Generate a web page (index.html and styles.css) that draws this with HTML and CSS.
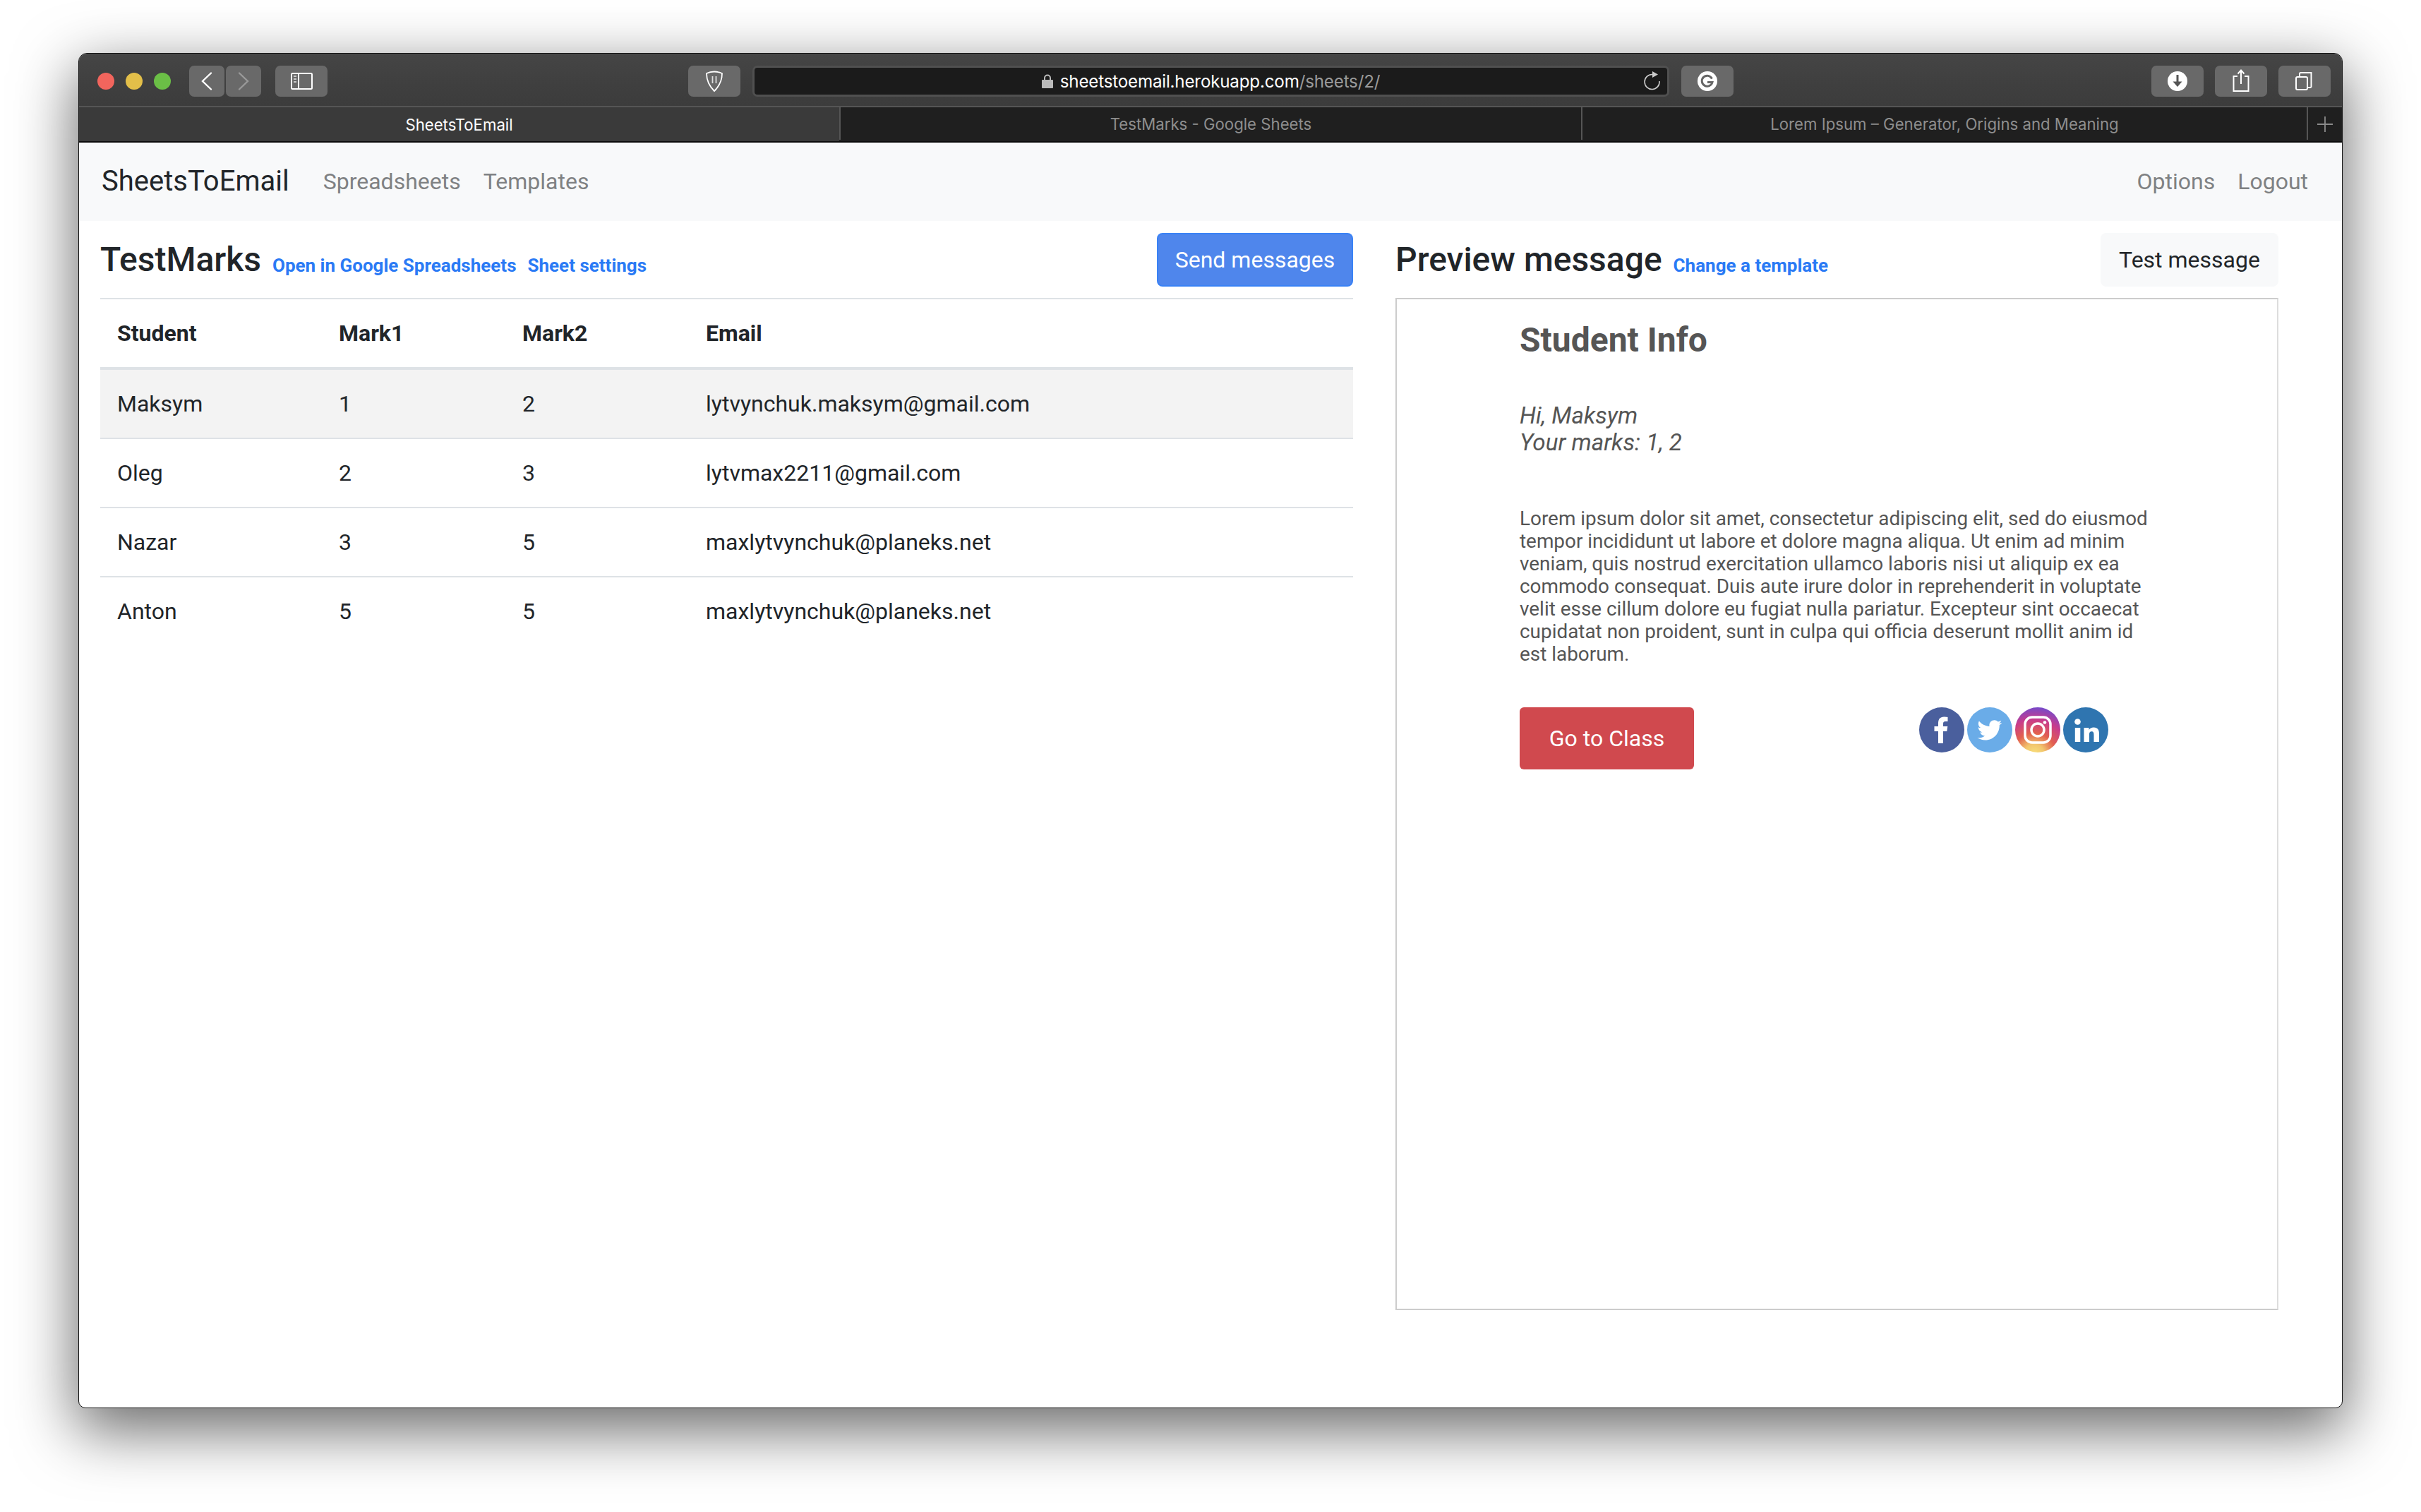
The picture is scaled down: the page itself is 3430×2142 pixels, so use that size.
FILE: index.html
```html
<!DOCTYPE html>
<html lang="en">
<head>
<meta charset="utf-8">
<title>SheetsToEmail</title>
<link rel="stylesheet" href="styles.css">
</head>
<body>
<div class="window">
  <div class="toolbar">
    <div class="lights"><span class="light red"></span><span class="light yellow"></span><span class="light green"></span></div>
    <div class="nav-btns">
      <button class="tbtn tbtn-half"><svg width="50" height="44" viewBox="0 0 50 44"><path d="M31 10.500 19 22l12 11.500" fill="none" stroke="#fff" stroke-width="2.400" stroke-linecap="round"/></svg></button>
      <button class="tbtn tbtn-half"><svg width="50" height="44" viewBox="0 0 50 44"><path d="M19 10.500 31 22 19 33.500" fill="none" stroke="#999" stroke-width="2.400" stroke-linecap="round"/></svg></button>
    </div>
    <button class="tbtn tbtn-side"><svg width="74" height="44" viewBox="0 0 74 44"><rect x="23" y="11" width="29" height="22" rx="1.500" fill="none" stroke="#fff" stroke-width="2"/><path d="M33 11v22" stroke="#fff" stroke-width="2"/><path d="M26 15h4M26 19h4M26 23h4" stroke="#ccc" stroke-width="2"/></svg></button>
    <button class="tbtn tbtn-shield"><svg width="74" height="44" viewBox="0 0 74 44"><path d="M37 8.500c4 0 8 1 11 2.500 0 9-3 17-11 25-8-8-11-16-11-25 3-1.500 7-2.500 11-2.500Z" fill="none" stroke="#fff" stroke-width="1.800"/><path d="M34.500 15v10M39.500 15v10" stroke="#ddd" stroke-width="1.800"/></svg></button>
    <div class="urlbar">
      <span class="url-text"><svg class="lock" width="16" height="20" viewBox="0 0 16 20"><path d="M4 9V5.500a4 4 0 0 1 8 0V9" fill="none" stroke="#bbb" stroke-width="2"/><rect y="8" width="16" height="12" rx="1" fill="#bbb"/></svg><span class="url-host">sheetstoemail.herokuapp.com</span><span class="url-path">/sheets/2/</span></span>
      <svg class="reload" width="24" height="28" viewBox="0 0 24 28"><path d="M22 14A10.500 10.500 0 1 1 12 4.500" fill="none" stroke="#ccc" stroke-width="1.600"/><path d="M12 0l8 4.500-8 4.500Z" fill="#ccc"/></svg>
    </div>
    <button class="tbtn tbtn-g"><svg width="74" height="44" viewBox="0 0 74 44"><circle cx="37" cy="22" r="14" fill="#fff"/><path d="M43.500 18.500A7.500 7.500 0 1 0 44 23.500h-7" fill="none" stroke="#666" stroke-width="3"/></svg></button>
    <div class="spacer"></div>
    <button class="tbtn tbtn-dl"><svg width="74" height="44" viewBox="0 0 74 44"><circle cx="37" cy="22" r="14" fill="#fff"/><path d="M37 13v11" stroke="#555" stroke-width="3"/><path d="M30.500 22.500h13L37 30Z" fill="#555"/></svg></button>
    <button class="tbtn tbtn-share"><svg width="74" height="44" viewBox="0 0 74 44"><path d="M32 15h-5.500v21h21V15H42" fill="none" stroke="#fff" stroke-width="2"/><path d="M37 7v19" stroke="#fff" stroke-width="2"/><path d="M32.500 11.500 37 6.500l4.500 5" fill="none" stroke="#fff" stroke-width="2"/></svg></button>
    <button class="tbtn"><svg width="74" height="44" viewBox="0 0 74 44"><rect x="25" y="16" width="16" height="18" rx="2" fill="none" stroke="#fff" stroke-width="2"/><path d="M30 16v-4.500a1.500 1.500 0 0 1 1.500-1.500h15v19.500a1.500 1.500 0 0 1-1.500 1.500h-4" fill="none" stroke="#fff" stroke-width="2"/></svg></button>
  </div>
  <div class="tabs">
    <div class="tab tab-active">SheetsToEmail</div>
    <div class="tab tab-second">TestMarks - Google Sheets</div>
    <div class="tab tab-third">Lorem Ipsum – Generator, Origins and Meaning</div>
    <div class="tab-plus"><svg width="24" height="24" viewBox="0 0 24 24"><path d="M12 1v22M1 12h22" stroke="#8a8a8a" stroke-width="1.800"/></svg></div>
  </div>
  <nav class="navbar">
    <a class="brand">SheetsToEmail</a>
    <a class="nav-link">Spreadsheets</a>
    <a class="nav-link">Templates</a>
    <div class="spacer"></div>
    <a class="nav-link">Options</a>
    <a class="nav-link">Logout</a>
  </nav>
  <main class="content">
    <section class="col-left">
      <div class="head-row">
        <h4 class="title">TestMarks</h4>
        <a class="small-link">Open in Google Spreadsheets</a>
        <a class="small-link">Sheet settings</a>
        <div class="spacer"></div>
        <button class="btn btn-primary">Send messages</button>
      </div>
      <table class="table">
        <thead>
          <tr><th class="c1">Student</th><th class="c2">Mark1</th><th class="c3">Mark2</th><th>Email</th></tr>
        </thead>
        <tbody>
          <tr class="row-active"><td>Maksym</td><td>1</td><td>2</td><td>lytvynchuk.maksym@gmail.com</td></tr>
          <tr><td>Oleg</td><td>2</td><td>3</td><td>lytvmax2211@gmail.com</td></tr>
          <tr><td>Nazar</td><td>3</td><td>5</td><td>maxlytvynchuk@planeks.net</td></tr>
          <tr><td>Anton</td><td>5</td><td>5</td><td>maxlytvynchuk@planeks.net</td></tr>
        </tbody>
      </table>
    </section>
    <section class="col-right">
      <div class="head-row">
        <h4 class="title">Preview message</h4>
        <a class="small-link">Change a template</a>
        <div class="spacer"></div>
        <button class="btn btn-light">Test message</button>
      </div>
      <div class="preview">
        <div class="mail">
          <h2 class="mail-title">Student Info</h2>
          <p class="mail-greet">Hi, Maksym<br>Your marks: 1, 2</p>
          <p class="mail-body">Lorem ipsum dolor sit amet, consectetur adipiscing elit, sed do eiusmod tempor incididunt ut labore et dolore magna aliqua. Ut enim ad minim veniam, quis nostrud exercitation ullamco laboris nisi ut aliquip ex ea commodo consequat. Duis aute irure dolor in reprehenderit in voluptate velit esse cillum dolore eu fugiat nulla pariatur. Excepteur sint occaecat cupidatat non proident, sunt in culpa qui officia deserunt mollit anim id est laborum.</p>
          <div class="mail-foot">
            <a class="btn-class">Go to Class</a>
            <div class="socials">
              <svg width="64" height="64" viewBox="0 0 64 64"><circle cx="32" cy="32" r="32" fill="#4a5f9d"/><path d="M27 51V34h-5.500v-7H27v-5c0-5.500 3.200-8.500 8-8.500 2.200 0 4.500.3 5.500.5v6h-3.300c-2.700 0-3.200 1.300-3.200 3.200V27h6.300l-1 7H34v17Z" fill="#fff"/></svg>
              <svg width="64" height="64" viewBox="0 0 64 64"><circle cx="32" cy="32" r="32" fill="#6aace8"/><g transform="translate(14.500 15) scale(1.450)"><path d="M23.954 4.569c-.885.389-1.83.654-2.825.775 1.014-.611 1.794-1.574 2.163-2.723-.951.555-2.005.959-3.127 1.184-.896-.959-2.173-1.559-3.591-1.559-2.717 0-4.92 2.203-4.92 4.917 0 .39.045.765.127 1.124C7.691 8.094 4.066 6.13 1.64 3.161c-.427.722-.666 1.561-.666 2.475 0 1.71.87 3.213 2.188 4.096-.807-.026-1.566-.248-2.228-.616v.061c0 2.385 1.693 4.374 3.946 4.827-.413.111-.849.171-1.296.171-.314 0-.615-.03-.916-.086.631 1.953 2.445 3.377 4.604 3.417-1.68 1.319-3.809 2.105-6.102 2.105-.39 0-.779-.023-1.17-.067 2.189 1.394 4.768 2.209 7.557 2.209 9.054 0 13.999-7.496 13.999-13.986 0-.209 0-.42-.015-.63.961-.689 1.8-1.56 2.46-2.548l-.047-.02z" fill="#fff"/></g></svg>
              <svg width="64" height="64" viewBox="0 0 64 64"><defs><radialGradient id="ig" cx="0.42" cy="1.05" r="1.150"><stop offset="0" stop-color="#f9e27d"/><stop offset="0.2" stop-color="#f2c66d"/><stop offset="0.42" stop-color="#e2604f"/><stop offset="0.68" stop-color="#c83c8c"/><stop offset="1" stop-color="#5a4fe0"/></radialGradient></defs><circle cx="32" cy="32" r="32" fill="url(#ig)"/><rect x="14" y="14" width="36" height="36" rx="10" fill="none" stroke="#fff" stroke-width="3.500"/><circle cx="32" cy="32" r="9" fill="none" stroke="#fff" stroke-width="3.500"/><circle cx="42" cy="21.500" r="2.300" fill="#fff"/></svg>
              <svg width="64" height="64" viewBox="0 0 64 64"><circle cx="32" cy="32" r="32" fill="#2f75b0"/><circle cx="20.500" cy="20.500" r="4.300" fill="#fff"/><rect x="16.800" y="29" width="7.500" height="20" fill="#fff"/><path d="M29.500 29h7v3c1.400-2.200 3.800-3.600 6.800-3.600 5.800 0 7.700 3.600 7.700 9V49h-7.500V39c0-2.700-.6-4.700-3.300-4.700S37 36.500 37 39v10h-7.500Z" fill="#fff"/></svg>
            </div>
          </div>
        </div>
      </div>
    </section>
  </main>
</div>
</body>
</html>
```

FILE: styles.css
```css
* { box-sizing: border-box; }
html, body { margin: 0; height: 2142px; background: #fff; overflow: hidden; }
body { padding: 75px 0 0 111px; font-family: Roboto, "Liberation Sans", sans-serif; font-weight: 400; color: #212529; }
a { text-decoration: none; }
button { font-family: inherit; font-weight: inherit; margin: 0; padding: 0; border: 0; }
.window {
  width: 3208px; height: 1920px; background: #fff; display: flex; flex-direction: column;
  border-radius: 12px 12px 10px 10px; overflow: hidden; border: 1px solid #111;
  box-shadow: 0 28px 85px 4px rgba(0,0,0,.58);
}
.toolbar {
  height: 76px; display: flex; align-items: flex-start; padding: 16px 16px 0 0;
  background: linear-gradient(#454545, #3f3f3f 60%, #3c3c3c); border-top: 1px solid #4e4e4e; border-bottom: 2px solid #555;
}
.lights { display: flex; gap: 16px; padding: 10px 0 0 26px; width: 156px; }
.light { width: 24px; height: 24px; border-radius: 50%; }
.red { background: #f2655d; }
.yellow { background: #e3bf49; }
.green { background: #6bbf46; }
.nav-btns { display: flex; gap: 2px; margin-right: 20px; }
.tbtn { width: 74px; height: 44px; border-radius: 7px; background: #696969; display: block; flex: none; }
.tbtn svg { display: block; }
.tbtn-half { width: 50px; }
.tbtn-shield { margin-left: 511px; }
.tbtn-g { margin-left: 17px; }
.tbtn-dl { margin-right: 16px; }
.tbtn-share { margin-right: 16px; }
.urlbar {
  width: 1299px; height: 44px; margin-left: 17px; background: #1b1b1b; border: 3px solid #505050;
  border-radius: 7px; display: flex; align-items: center; justify-content: center; position: relative;
}
.url-text { font-family: Inter, sans-serif; font-size: 24.200px; display: flex; align-items: center; color: #fff; letter-spacing: -.2px; }
.lock { margin-right: 10px; }
.url-path { color: #9a9a9a; }
.reload { position: absolute; right: 9px; top: 5px; }
.spacer { flex: 1; }
.tabs { height: 50px; display: flex; background: #1f1f1f; border-bottom: 2px solid #0c0c0c; font-family: Inter, sans-serif; font-size: 22.200px; color: #8e8e8e; }
.tab { display: flex; align-items: center; justify-content: center; }
.tab-active { width: 1077px; background: #3a3a3a; color: #fff; }
.tab-second { width: 1053px; border-left: 2px solid #555; border-right: 2px solid #555; margin-bottom: 2px; }
.tab-third { width: 1028px; border-right: 2px solid #555; margin-bottom: 2px; }
.tab-plus { flex: 1; display: flex; align-items: center; justify-content: center; padding-right: 1px; }
.navbar { height: 111px; background: #f8f9fa; display: flex; align-items: center; padding: 0 32px 2px; flex: none; }
.brand { font-size: 40px; color: #212529; margin-right: 32px; }
.nav-link { font-size: 32px; color: #7f8183; padding: 0 16px; }
.content { flex: 1; display: flex; padding: 17px 0 0 30px; gap: 60px; }
.col-left { width: 1775px; }
.col-right { width: 1251px; }
.head-row { height: 76px; margin-bottom: 16px; display: flex; align-items: center; }
.title { margin: 0 16px 0 0; font-size: 48px; font-weight: 500; line-height: 1.2; color: #212529; }
.small-link { font-size: 26px; font-weight: 700; color: #2a7af5; margin-right: 16px; padding-top: 15px; }
.btn { height: 76px; font-size: 32px; border-radius: 8px; white-space: nowrap; }
.btn-primary { background: #4f86ec; color: #fff; border: 2px solid #3a82f5; width: 278px; }
.btn-light { background: #f8f9fa; color: #212529; width: 252px; }
.table { width: 100%; border-collapse: collapse; font-size: 32px; line-height: 48px; table-layout: fixed; }
.table th { text-align: left; font-weight: 700; padding: 24px; border-top: 2px solid #dee2e6; border-bottom: 4px solid #dee2e6; }
.table td { padding: 24px; border-top: 2px solid #dee2e6; }
.c1 { width: 314px; }
.c2, .c3 { width: 260px; }
.row-active { background: #f3f3f3; }
.preview { height: 1434px; border: 2px solid #ccc; border-right-color: #ddd; padding: 0 173px 0 174px; color: #555; }
.mail { width: 900px; }
.mail-title { margin: 0; padding-top: 30px; font-size: 48px; line-height: 56px; font-weight: 700; color: #555; }
.mail-greet { margin: 60px 0 0; font-size: 33.200px; line-height: 37.500px; font-style: italic; color: #555; }
.mail-body { margin: 74px 0 0; font-size: 27.900px; line-height: 32px; color: #555; }
.mail-foot { display: flex; margin-top: 59px; align-items: flex-start; }
.btn-class { width: 247px; height: 88px; background: #d0494e; color: #fff; font-size: 32px; border-radius: 6px; display: flex; align-items: center; justify-content: center; }
.socials { display: flex; gap: 4px; margin-left: 319px; }
.socials svg { display: block; }
```
